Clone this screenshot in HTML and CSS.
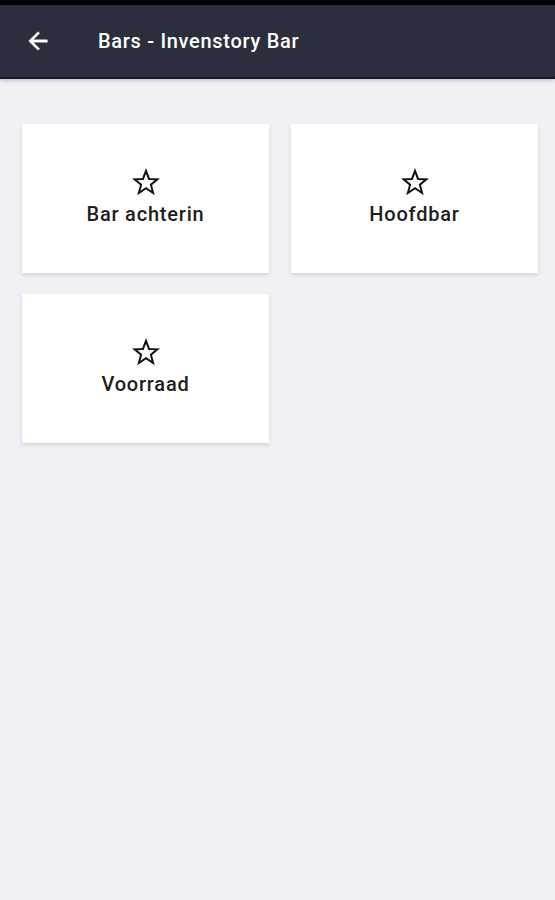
FILE: index.html
```html
<!DOCTYPE html>
<html lang="nl">
<head>
    <meta charset="UTF-8">
    <meta name="viewport" content="width=device-width, initial-scale=1.0">
    <title>Bars - Invenstory Bar</title>
    <link rel="stylesheet" href="styles.css">
</head>
<body>
    <div class="statusbar"></div>
    <header class="topbar">
        <button class="back" aria-label="Terug">
            <svg width="28" height="28" viewBox="0 0 24 24"><path d="M20 11H7.83l5.59-5.59L12 4l-8 8 8 8 1.41-1.41L7.83 13H20v-2z" fill="#fff" stroke="#fff" stroke-width="0.4"/></svg>
        </button>
        <h1>Bars - Invenstory Bar</h1>
    </header>

    <main class="grid">
        <div class="card">
            <svg class="star" viewBox="0 0 24 24"><path d="M12 2.5l2.6 6.9 7.2.3-5.6 4.6 1.9 7.1L12 17.3l-6.1 4.1 1.9-7.1-5.6-4.6 7.2-.3z" fill="none" stroke="#111" stroke-width="1.7" stroke-linejoin="miter"/></svg>
            <span class="label">Bar achterin</span>
        </div>
        <div class="card">
            <svg class="star" viewBox="0 0 24 24"><path d="M12 2.5l2.6 6.9 7.2.3-5.6 4.6 1.9 7.1L12 17.3l-6.1 4.1 1.9-7.1-5.6-4.6 7.2-.3z" fill="none" stroke="#111" stroke-width="1.7" stroke-linejoin="miter"/></svg>
            <span class="label">Hoofdbar</span>
        </div>
        <div class="card">
            <svg class="star" viewBox="0 0 24 24"><path d="M12 2.5l2.6 6.9 7.2.3-5.6 4.6 1.9 7.1L12 17.3l-6.1 4.1 1.9-7.1-5.6-4.6 7.2-.3z" fill="none" stroke="#111" stroke-width="1.7" stroke-linejoin="miter"/></svg>
            <span class="label">Voorraad</span>
        </div>
    </main>
</body>
</html>
```

FILE: styles.css
```css
body {
    margin: 0;
    height: 900px;
    background-color: #f0f0f5;
    font-family: Roboto, "Liberation Sans", sans-serif;
    overflow: hidden;
}

.statusbar {
    height: 5px;
    background-color: #050508;
}

.topbar {
    height: 72px;
    display: flex;
    align-items: center;
    background-color: #2b2f3d;
    border-bottom: 2px solid #15173a;
    box-shadow: 0 2px 4px rgba(0, 0, 0, 0.18);
}

.back {
    margin-left: 24px;
    padding: 0;
    width: 28px;
    height: 28px;
    background: none;
    border: none;
    display: flex;
}

.topbar h1 {
    margin: 0 0 0 46px;
    color: #fff;
    font-size: 20px;
    font-weight: 500;
    letter-spacing: 0.7px;
}

.grid {
    display: grid;
    grid-template-columns: 247px 247px;
    column-gap: 22px;
    row-gap: 21px;
    padding: 45px 0 0 22px;
}

.card {
    height: 149px;
    background-color: #fff;
    box-shadow: 0 2px 4px rgba(0, 0, 0, 0.12);
    display: flex;
    flex-direction: column;
    align-items: center;
    justify-content: center;
}

.star {
    width: 28px;
    height: 28px;
    margin-top: -4px;
}

.label {
    margin-top: 6px;
    font-size: 20px;
    font-weight: 500;
    letter-spacing: 0.8px;
    color: #1e1e1e;
}
```
